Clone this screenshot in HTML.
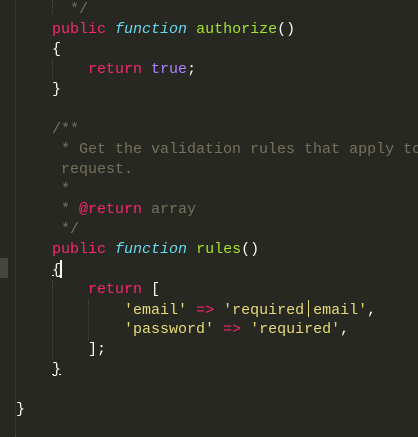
<!DOCTYPE html>
<html><head><meta charset="utf-8"><style>
html,body{margin:0;width:418px;height:437px;overflow:hidden;}
body{background:#272822;position:relative;font-family:"Liberation Mono",monospace;font-size:15px;}
.l{position:absolute;left:16px;height:20px;line-height:20px;white-space:pre;color:#f8f8f2;}
.k{color:#f92672}.f{color:#66d9ef;font-style:italic}.n{color:#a6e22e}.c{color:#75715e}.s{color:#e6db74}.p{color:#ae81ff}
.g{position:absolute;width:0;border-left:1px dotted #4a4a44;}
</style></head><body>
<div style="position:absolute;left:0;top:258px;width:8px;height:20px;background:#46463f"></div>
<div class="g" style="left:15px;top:0;height:437px"></div>
<div class="g" style="left:52px;top:0;height:14px"></div>
<div class="g" style="left:52px;top:60px;height:20px"></div>
<div class="g" style="left:52px;top:280px;height:80px"></div>
<div class="g" style="left:88px;top:300px;height:40px"></div>
<div class="l" style="top:0px">     <span class="c"> */</span></div>
<div class="l" style="top:20px">    <span class="k">public</span> <span class="f">function</span> <span class="n">authorize</span>()</div>
<div class="l" style="top:40px">    {</div>
<div class="l" style="top:60px">        <span class="k">return</span> <span class="p">true</span>;</div>
<div class="l" style="top:80px">    }</div>
<div class="l" style="top:120px">    <span class="c">/**</span></div>
<div class="l" style="top:140px">    <span class="c"> * Get the validation rules that apply to</span></div>
<div class="l" style="top:160px">    <span class="c"> request.</span></div>
<div class="l" style="top:180px">    <span class="c"> *</span></div>
<div class="l" style="top:200px">    <span class="c"> * </span><span class="k">@return</span><span class="c"> array</span></div>
<div class="l" style="top:220px">    <span class="c"> */</span></div>
<div class="l" style="top:240px">    <span class="k">public</span> <span class="f">function</span> <span class="n">rules</span>()</div>
<div class="l" style="top:260px">    <span style="text-decoration:underline">{</span><span style="display:inline-block;width:2px;height:18px;background:#f8f8f2;vertical-align:-4px;margin-left:-1px"></span></div>
<div class="l" style="top:280px">        <span class="k">return</span> [</div>
<div class="l" style="top:300px">            <span class="s">'email'</span> <span class="k">=&gt;</span> <span class="s">'required<span style="display:inline-block;width:1px;height:17px;background:#e6db74;vertical-align:-3px;margin:0 4px"></span>email'</span>,</div>
<div class="l" style="top:320px">            <span class="s">'password'</span> <span class="k">=&gt;</span> <span class="s">'required'</span>,</div>
<div class="l" style="top:340px">        ];</div>
<div class="l" style="top:360px">    <span style="text-decoration:underline">}</span></div>
<div class="l" style="top:400px">}</div>
</body></html>
